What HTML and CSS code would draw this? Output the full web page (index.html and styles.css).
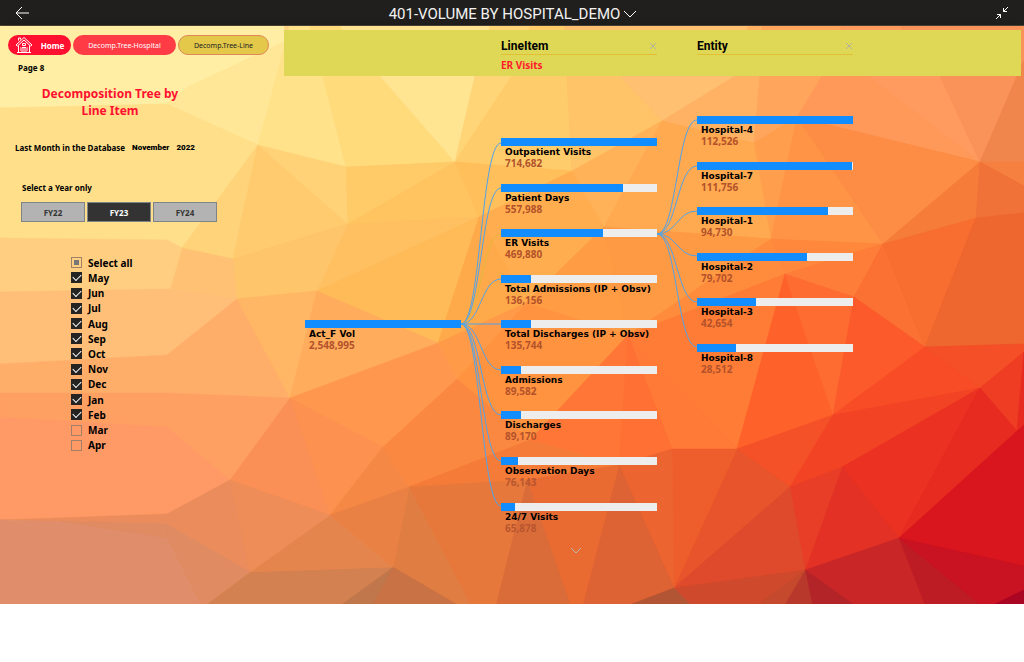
FILE: index.html
```
<!DOCTYPE html>
<html lang="en">
<head>
  <meta charset="UTF-8">
  <title>401-VOLUME BY HOSPITAL_DEMO</title>
  <link rel="stylesheet" href="styles.css">
</head>
<body>

  <header class="topbar">
    <button class="icon-btn" aria-label="Back">
      <svg width="16" height="14" viewBox="0 0 16 14"><path d="M14 7H1M7 1L1 7L7 13"/></svg>
    </button>
    <button class="report-name">401-VOLUME BY HOSPITAL_DEMO
      <svg width="14" height="8" viewBox="0 0 14 8"><path d="M1 1L7 7L13 1"/></svg>
    </button>
    <button class="icon-btn" aria-label="Exit full screen">
      <svg width="14" height="14" viewBox="0 0 14 14"><path d="M13 1L8.500 5.500M8.500 2V5.500H12M1 13L5.500 8.500M2 8.500H5.500V12"/></svg>
    </button>
  </header>

  <main class="report">
    <svg class="mesh" viewBox="0 26 1024 578" preserveAspectRatio="none" aria-hidden="true">
      <!-- top left -->
      <polygon color="#ffeea3" points="0,26 284,26 284,42 188,87 167,104 0,108"/>
      <polygon color="#ffe797" points="284,42 188,87 167,104 167,112 258,145 290,72 290,26"/>
      <polygon color="#ffdf8a" points="0,108 167,104 258,145 182,248 167,240 0,238"/>
      <polygon color="#ffe28a" points="290,26 318,26 346,167 258,145"/>
      <polygon color="#ffdb7c" points="310,26 340,26 380,76 455,162 346,167"/>
      <polygon color="#ffe592" points="340,26 490,26 475,76 455,162 380,76"/>
      <polygon color="#ffd578" points="490,26 530,26 512,76 455,162 475,76"/>
      <polygon color="#ffcc6b" points="512,76 530,26 564,26 572,171 455,162"/>
      <polygon color="#ffc468" points="564,26 620,76 662,121 572,171"/>
      <polygon color="#ffc072" points="564,26 750,26 735,76 662,121 620,76"/>
      <!-- top right -->
      <polygon color="#ffb264" points="735,76 748,26 762,26 760,76 754,143 662,121"/>
      <polygon color="#ffa65c" points="762,26 850,26 822,76 797,117 754,143 760,76"/>
      <polygon color="#ff9959" points="850,26 840,26 868,76 980,162 797,117 822,76"/>
      <polygon color="#ff9b5e" points="840,26 900,26 940,76 980,162 868,76"/>
      <polygon color="#fa935a" points="900,26 1024,26 1024,70 1017,76 980,162 940,76"/>
      <polygon color="#f0864c" points="1017,76 1024,60 1024,162 980,162"/>
      <polygon color="#ff9f4e" points="797,117 771,239 754,143"/>
      <polygon color="#ff9446" points="797,117 883,244 771,239"/>
      <polygon color="#fd8d44" points="797,117 980,162 883,244"/>
      <polygon color="#f58040" points="980,162 1024,162 1024,186"/>
      <polygon color="#f67d39" points="980,162 883,244 976,218"/>
      <polygon color="#f07238" points="980,162 1024,186 1024,213 976,218"/>
      <!-- upper middle -->
      <polygon color="#ffd37a" points="258,145 182,248 233,259"/>
      <polygon color="#ffcb6e" points="258,145 348,224 233,259"/>
      <polygon color="#ffd277" points="258,145 346,167 348,224"/>
      <polygon color="#ffcb69" points="346,167 455,162 348,224"/>
      <polygon color="#ffc460" points="455,162 479,217 348,224"/>
      <polygon color="#ffbf5a" points="455,162 572,171 479,217"/>
      <polygon color="#ffc061" points="348,224 479,217 317,291"/>
      <polygon color="#ffc56b" points="233,259 348,224 317,291 237,299"/>
      <polygon color="#ffc274" points="237,299 233,259 182,248 170,289"/>
      <polygon color="#ffad4e" points="479,217 572,171 604,227 526,303"/>
      <polygon color="#ffb258" points="572,171 662,121 604,227"/>
      <polygon color="#ffa950" points="662,121 754,143 771,239 604,227"/>
      <polygon color="#ffbb58" points="317,291 479,217 438,343"/>
      <polygon color="#ffaa4a" points="479,217 438,343 526,303"/>
      <!-- left -->
      <polygon color="#ffce80" points="0,238 167,240 182,248 170,289 0,292"/>
      <polygon color="#ffbf78" points="170,289 237,299 167,355 0,364 0,292"/>
      <polygon color="#ffae6a" points="0,364 167,355 237,299 290,398 167,393 0,393"/>
      <polygon color="#ffa063" points="0,393 167,393 290,398 230,480 167,427 0,417"/>
      <polygon color="#ff9966" points="0,417 167,427 230,480 167,514 0,520"/>
      <polygon color="#ffb665" points="237,299 317,291 290,398"/>
      <polygon color="#ffac5c" points="317,291 438,343 290,398"/>
      <!-- middle -->
      <polygon color="#ff9c44" points="604,227 628,335 526,303"/>
      <polygon color="#ff9a44" points="604,227 771,239 628,335"/>
      <polygon color="#ff8c3c" points="771,239 785,274 628,335"/>
      <polygon color="#ff7c36" points="785,274 737,449 628,335"/>
      <polygon color="#ff7a36" points="628,335 737,449 672,449"/>
      <polygon color="#ff9340" points="526,303 628,335 530,440 457,379"/>
      <polygon color="#ff7636" points="628,335 619,465 530,440"/>
      <polygon color="#fe7033" points="628,335 672,449 619,465"/>
      <polygon color="#ff9a48" points="438,343 526,303 457,379"/>
      <polygon color="#ff984e" points="438,343 457,379 383,447 290,398"/>
      <polygon color="#fb8840" points="457,379 530,440 409,487 383,447"/>
      <polygon color="#f47b38" points="530,440 619,465 527,480 409,487"/>
      <polygon color="#fc9150" points="290,398 383,447 330,515"/>
      <polygon color="#fa9056" points="290,398 330,515 230,480"/>
      <polygon color="#f68846" points="383,447 409,487 330,515"/>
      <!-- right -->
      <polygon color="#ff883d" points="771,239 883,244 785,274"/>
      <polygon color="#fe7d38" points="883,244 785,274 854,297"/>
      <polygon color="#fb7133" points="883,244 854,297 925,347"/>
      <polygon color="#f76e30" points="976,218 925,347 883,244"/>
      <polygon color="#ee672f" points="976,218 1024,213 1024,344 925,347"/>
      <polygon color="#ff612a" points="785,274 833,415 737,449"/>
      <polygon color="#fe6c32" points="785,274 854,297 833,415"/>
      <polygon color="#fc5a2a" points="854,297 925,347 833,415"/>
      <polygon color="#f84c27" points="925,347 980,388 833,415"/>
      <polygon color="#f54f27" points="925,347 1024,344 1024,352 980,388"/>
      <polygon color="#ef3d23" points="980,388 1024,352 1017,431"/>
      <polygon color="#e72b21" points="1017,431 1024,352 1024,425"/>
      <polygon color="#f55129" points="833,415 790,487 737,449"/>
      <polygon color="#f34325" points="833,415 980,388 842,467 790,487"/>
      <polygon color="#eb3121" points="980,388 899,538 842,467"/>
      <polygon color="#e72b21" points="980,388 1017,431 899,538"/>
      <polygon color="#d9161e" points="1017,431 1024,425 1024,566 899,538"/>
      <polygon color="#e33225" points="842,467 899,538 805,570"/>
      <polygon color="#e83e27" points="842,467 790,487 805,570"/>
      <!-- bottom -->
      <polygon color="#e8542b" points="737,449 790,487 674,588"/>
      <polygon color="#df4a2c" points="790,487 805,570 674,588"/>
      <polygon color="#ee5e2c" points="672,449 737,449 674,588"/>
      <polygon color="#ec6430" points="619,465 672,449 674,588"/>
      <polygon color="#dd6234" points="619,465 674,588 632,604 583,604"/>
      <polygon color="#e96b32" points="527,480 570,604 583,604 619,465"/>
      <polygon color="#da6c3a" points="527,480 496,604 570,604"/>
      <polygon color="#e6783c" points="527,480 409,487 470,604 496,604"/>
      <polygon color="#e07d43" points="409,487 393,567 456,604 470,604"/>
      <polygon color="#c87245" points="393,567 456,604 342,604"/>
      <polygon color="#bf774b" points="393,567 342,604 373,604"/>
      <polygon color="#d38150" points="250,572 393,567 342,604 207,604"/>
      <polygon color="#e5854e" points="250,572 330,515 393,567"/>
      <polygon color="#ea8144" points="330,515 409,487 393,567"/>
      <polygon color="#ee8d58" points="230,480 330,515 250,572"/>
      <polygon color="#eb8c5c" points="0,520 167,514 230,480 250,572 167,524"/>
      <polygon color="#e08b62" points="167,524 250,572 207,604 200,604 167,538"/>
      <polygon color="#e08d6c" points="0,520 167,524 167,538 200,604 0,604"/>
      <polygon color="#e08b62" points="60,521 167,524 167,538"/>
      <polygon color="#c92628" points="899,538 925,604 853,604 805,570"/>
      <polygon color="#be1c25" points="899,538 980,604 925,604"/>
      <polygon color="#c91222" points="899,538 1024,566 1024,590 995,604 980,604"/>
      <polygon color="#ab0524" points="1024,590 1024,604 995,604"/>
      <polygon color="#b32429" points="805,570 853,604 812,604"/>
      <polygon color="#b8392c" points="805,570 812,604 785,604"/>
      <polygon color="#c5492d" points="805,570 785,604 758,604"/>
      <polygon color="#cf4a2d" points="805,570 758,604 690,604 674,588"/>
      <polygon color="#b25535" points="674,588 690,604 632,604"/>
    </svg>

    <aside class="filters">
      <nav class="pages">
        <a href="#" class="pill home">
          <svg width="18" height="18" viewBox="0 0 18 18"><path d="M1 9L9 1.500L17 9L15.500 10L9 4L2.500 10ZM3.500 9.500V16.500H14.500V9.500M3.500 4.500V2H5.500V3.500M7 16.500V11.500H11V16.500M7.500 7.500H10.500V9.500H7.500ZM9 11.500V16.500M2 16.500H16M5 12H6M12 12H13M5 14H6M12 14H13"/></svg>
          Home
        </a>
        <a href="#" class="pill hospital">Decomp.Tree-Hospital</a>
        <a href="#" class="pill line">Decomp.Tree-Line</a>
      </nav>
      <p class="page-no">Page 8</p>
      <h1>Decomposition Tree by<br>Line Item</h1>
      <p class="last-month"><span>Last Month in the Database</span><b>November</b><b>2022</b></p>

      <p class="year-label" id="year-label">Select a Year only</p>
      <div class="years" role="group" aria-labelledby="year-label">
        <button>FY22</button>
        <button class="selected">FY23</button>
        <button>FY24</button>
      </div>

      <div class="months">
        <label><input type="checkbox" id="select-all">Select all</label>
        <label><input type="checkbox" checked>May</label>
        <label><input type="checkbox" checked>Jun</label>
        <label><input type="checkbox" checked>Jul</label>
        <label><input type="checkbox" checked>Aug</label>
        <label><input type="checkbox" checked>Sep</label>
        <label><input type="checkbox" checked>Oct</label>
        <label><input type="checkbox" checked>Nov</label>
        <label><input type="checkbox" checked>Dec</label>
        <label><input type="checkbox" checked>Jan</label>
        <label><input type="checkbox" checked>Feb</label>
        <label><input type="checkbox">Mar</label>
        <label><input type="checkbox">Apr</label>
      </div>
    </aside>

    <section class="visual">
      <div class="levels">
        <div class="level">
          <div class="level-head">
            <h2>LineItem</h2>
            <button class="close" aria-label="Remove LineItem"><svg width="8" height="8" viewBox="0 0 8 8"><path d="M1 1L7 7M7 1L1 7"/></svg></button>
          </div>
          <p>ER Visits</p>
        </div>
        <div class="level">
          <div class="level-head">
            <h2>Entity</h2>
            <button class="close" aria-label="Remove Entity"><svg width="8" height="8" viewBox="0 0 8 8"><path d="M1 1L7 7M7 1L1 7"/></svg></button>
          </div>
        </div>
      </div>

      <div class="tree">
        <svg class="links" viewBox="0 0 580 500" aria-hidden="true">
          <path d="M177 248C197 248 197 67 217 67"/>
          <path d="M177 248C197 248 197 112 217 112"/>
          <path class="active" d="M177 248C197 248 197 158 217 158"/>
          <path d="M177 248C197 248 197 203 217 203"/>
          <path d="M177 248H217"/>
          <path d="M177 248C197 248 197 294 217 294"/>
          <path d="M177 248C197 248 197 339 217 339"/>
          <path d="M177 248C197 248 197 385 217 385"/>
          <path d="M177 248C197 248 197 430 217 430"/>
          <path d="M373 158C393 158 393 44 413 44"/>
          <path d="M373 158C393 158 393 90 413 90"/>
          <path d="M373 158C393 158 393 135 413 135"/>
          <path d="M373 158C393 158 393 180 413 180"/>
          <path d="M373 158C393 158 393 226 413 226"/>
          <path d="M373 158C393 158 393 271 413 271"/>
        </svg>

        <div class="column root">
          <div class="node"><div class="bar"><i style="width: 100%"></i></div><b>Act_F Vol</b><span>2,548,995</span></div>
        </div>

        <div class="column line-items">
          <div class="node"><div class="bar"><i style="width: 100%"></i></div><b>Outpatient Visits</b><span>714,682</span></div>
          <div class="node"><div class="bar"><i style="width: 78%"></i></div><b>Patient Days</b><span>557,988</span></div>
          <div class="node"><div class="bar"><i style="width: 65.7%"></i></div><b>ER Visits</b><span>469,880</span></div>
          <div class="node"><div class="bar"><i style="width: 19%"></i></div><b>Total Admissions (IP + Obsv)</b><span>136,156</span></div>
          <div class="node"><div class="bar"><i style="width: 19%"></i></div><b>Total Discharges (IP + Obsv)</b><span>135,744</span></div>
          <div class="node"><div class="bar"><i style="width: 12.5%"></i></div><b>Admissions</b><span>89,582</span></div>
          <div class="node"><div class="bar"><i style="width: 12.5%"></i></div><b>Discharges</b><span>89,170</span></div>
          <div class="node"><div class="bar"><i style="width: 10.7%"></i></div><b>Observation Days</b><span class="faded">76,143</span></div>
          <div class="node"><div class="bar"><i style="width: 9.2%"></i></div><b>24/7 Visits</b><span class="faded">65,878</span></div>
          <button class="more" aria-label="Show more"><svg width="12" height="6" viewBox="0 0 12 6"><path d="M1 0L6 5L11 0"/></svg></button>
        </div>

        <div class="column entities">
          <div class="node"><div class="bar"><i style="width: 100%"></i></div><b>Hospital-4</b><span>112,526</span></div>
          <div class="node"><div class="bar"><i style="width: 99.3%"></i></div><b>Hospital-7</b><span>111,756</span></div>
          <div class="node"><div class="bar"><i style="width: 84.2%"></i></div><b>Hospital-1</b><span>94,730</span></div>
          <div class="node"><div class="bar"><i style="width: 70.8%"></i></div><b>Hospital-2</b><span>79,702</span></div>
          <div class="node"><div class="bar"><i style="width: 37.9%"></i></div><b>Hospital-3</b><span>42,654</span></div>
          <div class="node"><div class="bar"><i style="width: 25.3%"></i></div><b>Hospital-8</b><span>28,512</span></div>
        </div>
      </div>
    </section>
  </main>

<script>
  // only some of the months are ticked
  document.getElementById('select-all').indeterminate = true;
</script>

</body>
</html>
```

FILE: styles.css
```
* {
  box-sizing: border-box;
}

body {
  margin: 0;
  background-color: white;
  font-family: "Noto Sans", "Open Sans", sans-serif;
  color: black;
}

h1, h2, p {
  margin: 0;
}

button {
  font-family: inherit;
  border: none;
  background: none;
  padding: 0;
  cursor: pointer;
}

svg {
  display: block;
  fill: none;
}

/* Top bar */
.topbar {
  display: flex;
  justify-content: space-between;
  align-items: center;
  height: 26px;
  padding: 0 15px;
  background-color: #201f1e;
  border-bottom: 1px solid #4a4336;
}

.topbar svg {
  stroke: white;
}

.report-name {
  display: flex;
  align-items: center;
  gap: 3px;
  padding-top: 2px;
  color: #f3f2f1;
  font-family: Roboto, sans-serif;
  font-size: 15px;
}

/* Report page */
.report {
  position: relative;
  display: flex;
  min-height: 578px;
  background: linear-gradient(135deg, #ffeea3, #ff9a48 55%, #c91222);
  box-shadow: 0 2px 10px rgba(0, 0, 0, 0.2);
}

.mesh {
  position: absolute;
  inset: 0;
  width: 100%;
  height: 100%;
}

.mesh polygon {
  fill: currentColor;
  stroke: currentColor;
  stroke-width: 0.5;
}

/* Left side */
.filters {
  position: relative;
  width: 284px;
  padding: 9px 8px;
}

.pages {
  display: flex;
  gap: 2px;
}

.pill {
  display: flex;
  align-items: center;
  justify-content: center;
  height: 20px;
  border-radius: 10px;
  font-size: 7px;
  text-decoration: none;
}

.pill.home {
  width: 63px;
  gap: 8px;
  background-color: #ff1030;
  color: white;
  font-size: 8px;
  font-weight: bold;
}

.pill.home svg {
  stroke: white;
}

.pill.hospital {
  width: 103px;
  background-color: #ff3b45;
  color: white;
}

.pill.line {
  width: 91px;
  background-color: #e3c84a;
  border: 1px solid #e0875a;
  color: #222;
}

.page-no {
  padding: 7px 10px 0;
  font-size: 8px;
  line-height: 12px;
  font-weight: bold;
}

h1 {
  width: 204px;
  padding-top: 11px;
  color: #ff1030;
  font-size: 12px;
  line-height: 17px;
  text-align: center;
}

.last-month {
  display: flex;
  gap: 7px;
  padding: 23px 7px 0;
  font-size: 8px;
  line-height: 12px;
  font-weight: bold;
}

.last-month b {
  font-family: Roboto, sans-serif;
  font-size: 8px;
}

.year-label {
  padding: 28px 14px 0;
  font-size: 8px;
  line-height: 12px;
  font-weight: bold;
}

.years {
  display: flex;
  gap: 2px;
  margin: 8px 0 0 13px;
}

.years button {
  width: 64px;
  height: 20px;
  background-color: #b3b3b3;
  border: 1px solid #7f8489;
  color: #333;
  font-size: 8px;
  font-weight: bold;
}

.years .selected {
  background-color: #333;
  color: white;
}

.months {
  display: grid;
  grid-auto-rows: 1fr;
  height: 198px;
  margin: 33px 0 0 63px;
  justify-content: start;
}

.months label {
  display: flex;
  align-items: center;
  gap: 6px;
  font-size: 10px;
  line-height: 14px;
  font-weight: bold;
}

.months input {
  appearance: none;
  display: grid;
  place-items: center;
  width: 11px;
  height: 11px;
  margin: 0;
  border: 1px solid #a08068;
}

.months input:checked {
  background-color: #252423;
  border-color: #252423;
}

.months input:checked::before {
  content: "";
  width: 7px;
  height: 4px;
  margin-bottom: 2px;
  border-left: 1px solid white;
  border-bottom: 1px solid white;
  transform: rotate(-45deg);
}

.months input:indeterminate::before {
  content: "";
  width: 5px;
  height: 5px;
  background-color: #777;
}

/* Decomposition tree */
.visual {
  position: relative;
  flex: 1;
  margin: 4px 3px 0 0;
}

.levels {
  display: flex;
  gap: 40px;
  height: 46px;
  padding: 8px 0 0 217px;
  background-color: #dfd857;
}

.level {
  width: 156px;
}

.level-head {
  display: flex;
  justify-content: space-between;
  align-items: center;
  height: 17px;
  border-bottom: 1px solid #e3bf35;
}

h2 {
  font-family: Roboto, sans-serif;
  font-size: 12px;
}

.close svg {
  stroke: #b3b0a0;
}

.level p {
  color: #ff1a2e;
  font-size: 10px;
  line-height: 20px;
  font-weight: bold;
}

.tree {
  position: relative;
  display: flex;
  gap: 40px;
  padding-left: 21px;
}

.links {
  position: absolute;
  left: 0;
  top: 0;
  width: 580px;
  height: 500px;
}

.links path {
  stroke: #4fa3ea;
}

.links .active {
  stroke: #e0b83a;
}

.column {
  display: flex;
  flex-direction: column;
  width: 156px;
}

.root {
  padding-top: 244px;
}

.line-items {
  height: 478px;
  padding-top: 62px;
}

.entities {
  height: 313px;
  padding-top: 40px;
}

.node {
  flex: 1;
}

.bar {
  height: 8px;
  background-color: #ededed;
}

.bar i {
  display: block;
  height: 8px;
  background-color: #118dff;
}

.node b, .node span {
  display: block;
  padding-left: 4px;
}

.node b {
  font-family: "DejaVu Sans", Verdana, sans-serif;
  font-size: 9px;
  line-height: 12px;
}

.node span {
  color: #b3522a;
  font-size: 10px;
  line-height: 10px;
  font-weight: bold;
}

.node .faded {
  color: #b8562f;
}

.more {
  width: 150px;
  height: 6px;
}

.more svg {
  margin: 0 auto;
  stroke: #bdb5ab;
}
```
